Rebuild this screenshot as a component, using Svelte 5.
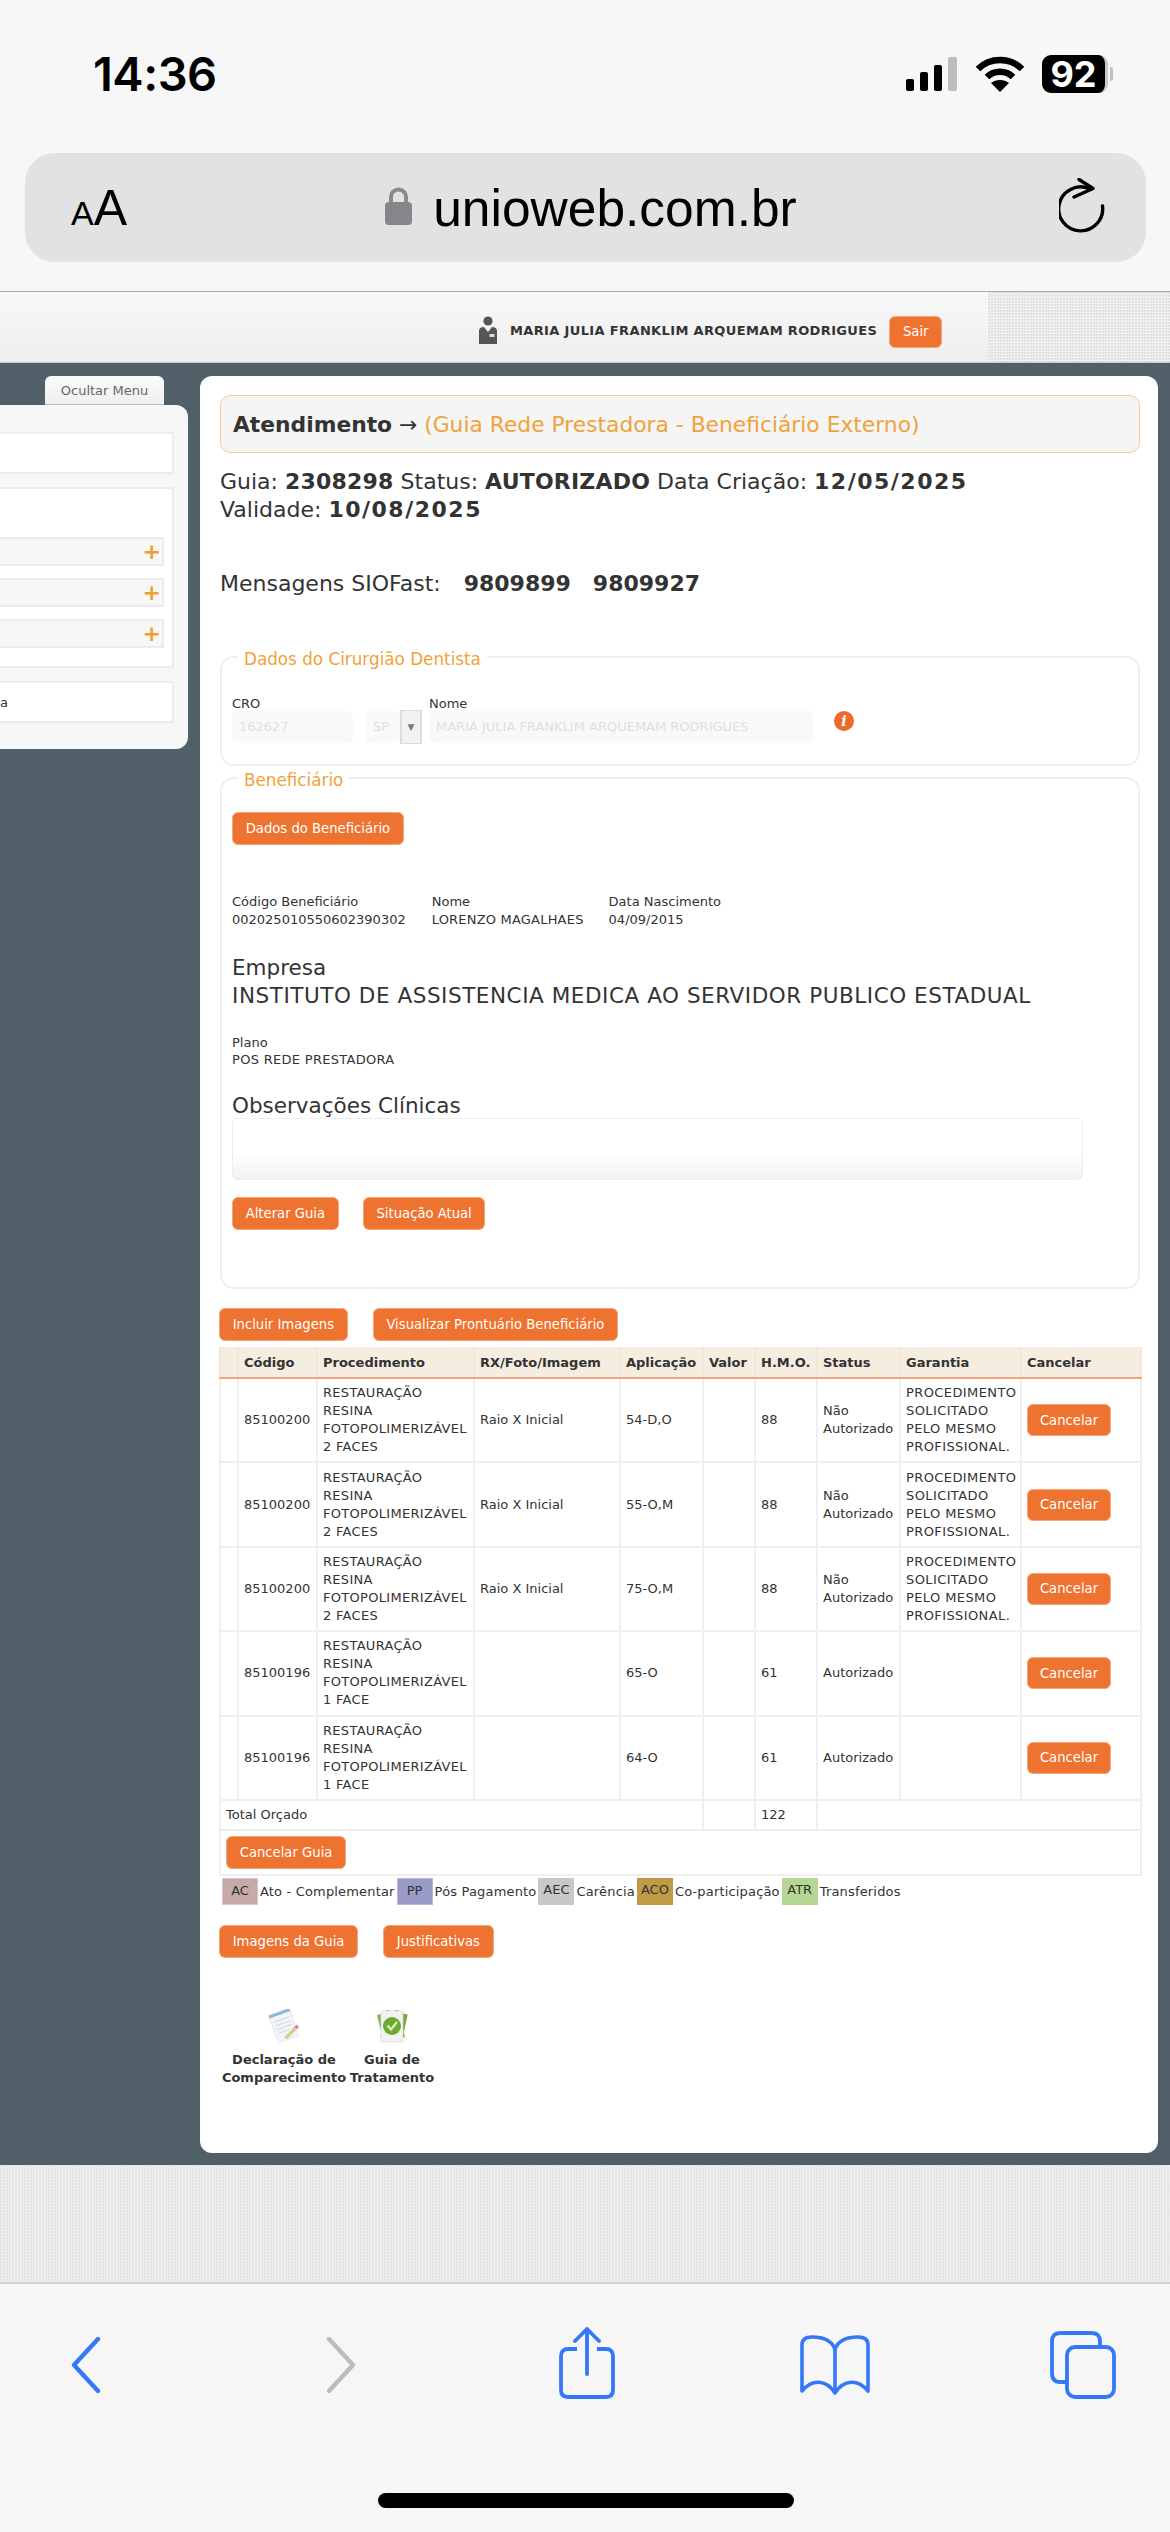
<script>
  const rows = [
    { code: '85100200', face: '2 FACES', rx: 'Raio X Inicial', app: '54-D,O', hmo: '88', no: true },
    { code: '85100200', face: '2 FACES', rx: 'Raio X Inicial', app: '55-O,M', hmo: '88', no: true },
    { code: '85100200', face: '2 FACES', rx: 'Raio X Inicial', app: '75-O,M', hmo: '88', no: true },
    { code: '85100196', face: '1 FACE', rx: '', app: '65-O', hmo: '61', no: false },
    { code: '85100196', face: '1 FACE', rx: '', app: '64-O', hmo: '61', no: false }
  ];
  const legend = [
    { k: 'AC', t: 'Ato - Complementar', c: 'ac' },
    { k: 'PP', t: 'Pós Pagamento', c: 'pp' },
    { k: 'AEC', t: 'Carência', c: 'aec' },
    { k: 'ACO', t: 'Co-participação', c: 'aco' },
    { k: 'ATR', t: 'Transferidos', c: 'atr' }
  ];
</script>

<div class="phone">
  <div class="status">
    <span class="time">14:36</span>
    <div class="status-icons">
      <svg width="52" height="34" viewBox="0 0 52 34">
        <rect x="0" y="22" width="8" height="12" rx="2" fill="#000"/>
        <rect x="14" y="15" width="8" height="19" rx="2" fill="#000"/>
        <rect x="28" y="8" width="8" height="26" rx="2" fill="#000"/>
        <rect x="42" y="0" width="9" height="34" rx="2" fill="#bdbdbd"/>
      </svg>
      <svg class="wifi" width="50" height="36" viewBox="0 0 50 36">
        <path d="M3 13 C15 1 35 1 47 13" fill="none" stroke="#000" stroke-width="6.5"/>
        <path d="M12 21 C19 14 31 14 38 21" fill="none" stroke="#000" stroke-width="6.5"/>
        <path d="M25 36 L16 27 C21 23 29 23 34 27 Z" fill="#000"/>
      </svg>
      <div class="battery"><span>92</span></div>
      <div class="nub"></div>
    </div>
  </div>

  <div class="urlbar">
    <span class="aa"><small>A</small>A</span>
    <div class="url">
      <svg width="27" height="38" viewBox="0 0 27 38">
        <path d="M6 17 V10 a7.5 7.5 0 0 1 15 0 V17" fill="none" stroke="#8a8a8e" stroke-width="4"/>
        <rect x="0" y="15" width="27" height="23" rx="4" fill="#85858a"/>
      </svg>
      <span>unioweb.com.br</span>
    </div>
    <svg class="reload" width="46" height="55" viewBox="0 0 46 55">
      <path d="M30 10.5 A22 22 0 1 0 43.5 28" fill="none" stroke="#000" stroke-width="3.4" stroke-linecap="round"/>
      <path d="M20 1.5 L34 10.5 L15 19" fill="none" stroke="#000" stroke-width="3.4" stroke-linecap="round" stroke-linejoin="round"/>
    </svg>
  </div>

  <header class="site-head">
    <div class="user">
      <svg width="20" height="28" viewBox="0 0 20 28">
        <circle cx="10" cy="5" r="4.6" fill="#555"/>
        <path d="M1 28 V15 Q1 11 6 11 L10 16 L14 11 Q19 11 19 15 V28 Z" fill="#555"/>
        <rect x="11.5" y="18" width="5" height="3" fill="#ddd"/>
      </svg>
      <strong>MARIA JULIA FRANKLIM ARQUEMAM RODRIGUES</strong>
      <button class="btn sair">Sair</button>
    </div>
    <div class="texture head-tex"></div>
  </header>

  <main class="stage">
    <aside class="side">
      <div class="tab">Ocultar Menu</div>
      <div class="panel">
        <div class="box b1"></div>
        <div class="box b2">
          <div class="item"><span>+</span></div>
          <div class="item"><span>+</span></div>
          <div class="item"><span>+</span></div>
        </div>
        <div class="box b3"><span>a</span></div>
      </div>
    </aside>

    <section class="card">
      <h1><b>Atendimento</b> → <em>(Guia Rede Prestadora - Beneficiário Externo)</em></h1>
      <p class="meta">Guia: <b class="num">2308298</b> Status: <b class="num">AUTORIZADO</b> Data Criação: <b class="date">12/05/2025</b><br>Validade: <b class="date">10/08/2025</b></p>
      <p class="msgs">Mensagens SIOFast: <b class="m1">9809899</b> <b class="m2">9809927</b></p>

      <fieldset class="fs dent">
        <legend>Dados do Cirurgião Dentista</legend>
        <div class="dent-row">
          <div class="field"><label for="cro">CRO</label><div id="cro" class="inp cro">162627</div></div>
          <div class="field sel"><div class="inp uf">SP</div><div class="arrow">▼</div></div>
          <div class="field"><label for="nm">Nome</label><div id="nm" class="inp nome">MARIA JULIA FRANKLIM ARQUEMAM RODRIGUES</div></div>
          <div class="info">i</div>
        </div>
      </fieldset>

      <fieldset class="fs benef">
        <legend>Beneficiário</legend>
        <button class="btn">Dados do Beneficiário</button>
        <div class="bdata">
          <div><span>Código Beneficiário</span><span>002025010550602390302</span></div>
          <div><span>Nome</span><span class="cap">LORENZO MAGALHAES</span></div>
          <div><span>Data Nascimento</span><span>04/09/2015</span></div>
        </div>
        <p class="big emp">Empresa<br><span class="capbig">INSTITUTO DE ASSISTENCIA MEDICA AO SERVIDOR PUBLICO ESTADUAL</span></p>
        <p class="plano">Plano<br><span class="cap">POS REDE PRESTADORA</span></p>
        <p class="big obs">Observações Clínicas</p>
        <div class="ta"></div>
        <div class="btns b-alt">
          <button class="btn">Alterar Guia</button>
          <button class="btn">Situação Atual</button>
        </div>
      </fieldset>

      <div class="btns b-inc">
        <button class="btn">Incluir Imagens</button>
        <button class="btn">Visualizar Prontuário Beneficiário</button>
      </div>

      <table>
        <colgroup>
          <col style="width:18px"><col style="width:79px"><col style="width:157px"><col style="width:146px"><col style="width:83px"><col style="width:52px"><col style="width:62px"><col style="width:83px"><col style="width:121px"><col style="width:120px">
        </colgroup>
        <thead>
          <tr><th></th><th>Código</th><th>Procedimento</th><th>RX/Foto/Imagem</th><th>Aplicação</th><th>Valor</th><th>H.M.O.</th><th>Status</th><th>Garantia</th><th>Cancelar</th></tr>
        </thead>
        <tbody>
          {#each rows as r}
            <tr class="row">
              <td></td>
              <td>{r.code}</td>
              <td class="cap">RESTAURAÇÃO<br>RESINA<br>FOTOPOLIMERIZÁVEL<br>{r.face}</td>
              <td>{r.rx}</td>
              <td>{r.app}</td>
              <td></td>
              <td>{r.hmo}</td>
              <td>{#if r.no}Não<br>Autorizado{:else}Autorizado{/if}</td>
              <td class="cap2">{#if r.no}PROCEDIMENTO<br>SOLICITADO<br>PELO MESMO<br>PROFISSIONAL.{/if}</td>
              <td><button class="btn">Cancelar</button></td>
            </tr>
          {/each}
          <tr class="total">
            <td colspan="5">Total Orçado</td>
            <td></td>
            <td>122</td>
            <td colspan="3"></td>
          </tr>
          <tr class="cg">
            <td colspan="10"><button class="btn">Cancelar Guia</button></td>
          </tr>
        </tbody>
      </table>

      <div class="legend">
        {#each legend as l}
          <span class="chip {l.c}">{l.k}</span><span class="lt">{l.t}</span>
        {/each}
      </div>

      <div class="btns b-img">
        <button class="btn">Imagens da Guia</button>
        <button class="btn">Justificativas</button>
      </div>

      <div class="docs">
        <div class="doc d1">
          <svg width="34" height="34" viewBox="0 0 34 34">
            <g transform="rotate(-20 17 17)">
              <rect x="6" y="2" width="22" height="29" fill="#f3f5f6" stroke="#dde2e4" stroke-width="0.6"/>
              <rect x="6" y="2" width="22" height="3" fill="#84bcd8"/>
              <path d="M9 10h16M9 14h16M9 18h16M9 22h12" stroke="#d5d8da" stroke-width="1"/>
            </g>
            <path d="M17 29 L27 18 L30 20 L20 30 Z" fill="#dcc98c"/>
            <path d="M27 18 L30 15.5 L32 18 L30 20 Z" fill="#d2859a"/>
          </svg>
          <span>Declaração de<br>Comparecimento</span>
        </div>
        <div class="doc d2">
          <svg width="34" height="34" viewBox="0 0 34 34">
            <rect x="5" y="3" width="22" height="28" fill="#8cb44a" transform="rotate(-14 16 17)"/>
            <rect x="8" y="3" width="22" height="28" fill="#7ea63e" transform="rotate(12 19 17)"/>
            <rect x="6" y="2" width="22" height="31" fill="#f2f3f1" stroke="#d8dad6" stroke-width="0.6"/>
            <circle cx="17" cy="17" r="9" fill="#6fa92f"/>
            <path d="M12.5 16.5 L16 20.5 L22 13" fill="none" stroke="#dff0c0" stroke-width="2.2"/>
          </svg>
          <span>Guia de<br>Tratamento</span>
        </div>
      </div>
    </section>
  </main>

  <div class="texture foot-tex"></div>

  <nav class="toolbar">
    <div class="tools">
      <svg class="t-back" width="30" height="56" viewBox="0 0 30 56"><path d="M27 2 L3 28 L27 54" fill="none" stroke="#3478f6" stroke-width="4.4" stroke-linecap="round" stroke-linejoin="round"/></svg>
      <svg class="t-fwd" width="30" height="56" viewBox="0 0 30 56"><path d="M3 2 L27 28 L3 54" fill="none" stroke="#bcbcbc" stroke-width="4.4" stroke-linecap="round" stroke-linejoin="round"/></svg>
      <svg class="t-share" width="56" height="72" viewBox="0 0 56 72">
        <path d="M18 22 H9 Q2 22 2 29 V63 Q2 70 9 70 H47 Q54 70 54 63 V29 Q54 22 47 22 H38" fill="none" stroke="#3478f6" stroke-width="3.8"/>
        <path d="M28 47 V2 M16 14 L28 2 L40 14" fill="none" stroke="#3478f6" stroke-width="3.8" stroke-linecap="round" stroke-linejoin="round"/>
      </svg>
      <svg class="t-book" width="70" height="60" viewBox="0 0 70 60">
        <path d="M35 14 C31 4 22 2 12 2 Q2 2 2 10 V56 C12 44 26 44 35 58 C44 44 58 44 68 56 V10 Q68 2 58 2 C48 2 39 4 35 14 Z M35 14 V58" fill="none" stroke="#3478f6" stroke-width="3.6" stroke-linejoin="round"/>
      </svg>
      <svg class="t-tabs" width="66" height="68" viewBox="0 0 66 68">
        <path d="M50 16 V10 Q50 2 42 2 H10 Q2 2 2 10 V42 Q2 51 10 51 H17" fill="none" stroke="#3478f6" stroke-width="3.8"/>
        <rect x="17" y="16" width="47" height="50" rx="8" fill="none" stroke="#3478f6" stroke-width="3.8"/>
      </svg>
    </div>
    <div class="homebar"></div>
  </nav>
</div>

<style>
  :global(body) { margin: 0; background: #f7f7f7; }
  .phone { width: 1170px; height: 2532px; overflow: hidden; display: flex; flex-direction: column; background: #f7f7f7; font-family: "DejaVu Sans", Verdana, sans-serif; color: #333; }

  .status { height: 153px; box-sizing: border-box; padding: 55px 57px 0 93px; display: flex; justify-content: space-between; align-items: flex-start; font-family: Inter, "Liberation Sans", sans-serif; }
  .time { font-size: 47px; font-weight: 600; line-height: 38px; color: #000; letter-spacing: -0.5px; }
  .status-icons { display: flex; align-items: center; height: 38px; }
  .wifi { margin-left: 17px; }
  .battery { margin-left: 17px; width: 63px; height: 38px; background: #000; border-radius: 9px; display: flex; align-items: center; justify-content: center; border-right: 3px solid #c9c9c9; }
  .battery span { color: #fff; font-weight: 700; font-size: 36px; line-height: 38px; }
  .nub { width: 3px; height: 14px; background: #c0c0c0; border-radius: 0 3px 3px 0; margin-left: 2px; }

  .urlbar { margin: 0 24px 0 25px; height: 109px; background: #e2e2e2; border-radius: 30px; display: flex; align-items: center; justify-content: space-between; padding: 0 41px 0 46px; font-family: "Liberation Sans", Inter, sans-serif; color: #000; }
  .aa { font-size: 50px; line-height: 1; width: 60px; white-space: nowrap; }
  .aa small { font-size: 34px; }
  .url { display: flex; align-items: center; gap: 21px; font-size: 51.5px; margin-right: 8px; }
  .url svg { margin-top: -4px; }
  .reload { margin-top: -4px; }

  .site-head { margin-top: 29px; height: 72px; border-top: 1px solid #aaa; box-sizing: border-box; display: flex; justify-content: space-between; background: linear-gradient(#f8f8f8, #eeeeee); border-bottom: 1px solid #c9c9c9; }
  .user { margin-left: 478px; display: flex; align-items: center; height: 71px; }
  .user svg { margin-top: 5px; }
  .user strong { margin-left: 12px; font-size: 13px; letter-spacing: .36px; color: #333; white-space: nowrap; margin-top: 5px; }
  .head-tex { width: 182px; }
  .texture {
    background-color: #f1f1f1;
    background-image:
      radial-gradient(circle at 1px 1px, rgba(0,0,0,.055) 0 1px, transparent 1.2px),
      repeating-linear-gradient(0deg, rgba(0,0,0,.02) 0 1px, transparent 1px 3px);
    background-size: 3px 3px, auto;
  }

  .btn { background: #ee7230; color: #fff; border: 1px solid #f6a77a; border-radius: 6px; font: 13.2px/1 "DejaVu Sans", Verdana, sans-serif; height: 33px; padding: 0 12.7px; white-space: nowrap; box-sizing: border-box; }
  .sair { margin-left: 12px; height: 32px; width: 53px; padding: 0; margin-top: 9px; }

  .stage { height: 1802px; background: #515f69; display: flex; padding-top: 13px; box-sizing: border-box; }
  .side { width: 188px; flex: none; display: flex; flex-direction: column; align-items: flex-end; }
  .tab { width: 119px; height: 29px; margin-right: 24px; box-sizing: border-box; background: linear-gradient(#fbfbfb, #efefef); border-radius: 6px 6px 0 0; border-bottom: 1px solid #bbb; font-size: 13px; line-height: 29px; text-align: center; color: #666; }
  .panel { width: 188px; height: 344px; box-sizing: border-box; background: #f7f7f7; border-radius: 0 12px 12px 0; padding: 27px 14px 0 0; display: flex; flex-direction: column; gap: 13px; }
  .box { background: #fff; border: 2px solid #ececec; border-left: 0; box-sizing: border-box; }
  .b1, .b3 { height: 42px; }
  .b2 { height: 181px; padding: 48px 8px 0 0; display: flex; flex-direction: column; gap: 12px; }
  .b3 { font-size: 13px; line-height: 40px; color: #333; }
  .item { height: 29px; background: #f7f7f7; border: 2px solid #ececec; border-left: 0; box-sizing: border-box; display: flex; justify-content: flex-end; align-items: center; padding-right: 1px; color: #f0a033; font-size: 22px; font-weight: 700; }

  .card { width: 958px; margin-left: 12px; height: 1777px; box-sizing: border-box; background: #fff; border-radius: 12px; padding: 19px 18px 0 20px; }
  h1 { margin: 0; height: 58px; box-sizing: border-box; background: #f5f5f5; border: 1px solid #f3cd9b; border-radius: 10px; padding: 0 12px; font-size: 21.8px; font-weight: 400; line-height: 57px; white-space: nowrap; }
  h1 b { font-weight: 700; }
  h1 em { font-style: normal; color: #f0a23c; }
  .meta { margin: 15px 0 0; font-size: 22px; line-height: 28px; }
  .num { letter-spacing: .2px; }
  .date { letter-spacing: 1.5px; }
  .msgs { margin: 46px 0 0; font-size: 22px; line-height: 28px; }
  .m1 { margin-left: 16px; }
  .m2 { margin-left: 15px; }

  .fs { border: 2px solid #efefef; border-radius: 14px; margin: 0; padding: 0 10px; box-sizing: border-box; min-width: 0; }
  legend { color: #f0a23c; font-size: 16.8px; line-height: 24px; padding: 3px 6px 0; margin-left: 6px; }
  .dent { margin-top: 45.5px; height: 122.5px; }
  .dent-row { display: flex; align-items: flex-start; margin-top: 22.5px; }
  .field { display: flex; flex-direction: column; }
  .field label { font-size: 13px; line-height: 15px; height: 18px; padding-top: 3px; box-sizing: border-box; }
  .inp { height: 32px; box-sizing: border-box; background: #f9f9f9; border-radius: 5px; font-size: 13px; line-height: 32px; color: #dfdfdf; padding: 0 7px; white-space: nowrap; overflow: hidden; }
  .cro { width: 121px; margin-right: 13px; }
  .sel { flex-direction: row; margin-top: 18px; margin-right: 7px; }
  .uf { width: 34px; }
  .arrow { height: 32px; margin-top: -1px; border: 2px solid #ddd; border-width: 1px 2px; background: #f2f2f2; color: #777; font-size: 9px; line-height: 32px; text-align: center; width: 18px; }
  .nome { width: 384px; }
  .info { margin: 18px 0 0 21px; width: 20px; height: 20px; border-radius: 50%; background: #ee6a2a; color: #fff; font: italic 700 14px/20px "DejaVu Serif", serif; text-align: center; }

  .benef { margin-top: -1.5px; height: 524.5px; }
  .benef > .btn { display: block; margin-top: 20.5px; }
  .bdata { display: flex; gap: 25px; margin-top: 48px; font-size: 13px; line-height: 18px; }
  .bdata > div { display: flex; flex-direction: column; }
  .bdata > div:first-child { margin-right: 1px; }
  .cap { letter-spacing: .3px; }
  .bdata .cap { letter-spacing: .2px; }
  .cap2 { letter-spacing: .4px; }
  .capbig { letter-spacing: .55px; }
  .big { margin: 0; font-size: 21.5px; line-height: 28px; }
  .emp { margin-top: 25px; white-space: nowrap; }
  .plano { margin: 24px 0 0; font-size: 13px; line-height: 17px; }
  .obs { margin-top: 25px; line-height: 26px; }
  .ta { margin-top: -1px; width: 851px; height: 62px; box-sizing: border-box; border: 1px solid #eee; border-radius: 6px; background: linear-gradient(#fff 55%, #f2f2f2); }
  .btns { display: flex; gap: 25px; }
  .b-alt { margin-top: 17px; gap: 24px; }
  .b-inc { margin-top: 19px; margin-left: -1px; }

  table { margin: 6px 0 0 -1px; width: 921px; border-collapse: collapse; table-layout: fixed; font-size: 13px; line-height: 18px; }
  th { height: 28px; background: #f5ede0; border: 2px solid #eee8dc; border-top: 0; border-bottom: 2px solid #f2a87a; padding: 2px 5px 0; box-sizing: content-box; text-align: left; font-weight: 700; white-space: nowrap; }
  td { border: 2px solid #efefef; padding: 0 5px; vertical-align: middle; white-space: nowrap; }
  .row td { height: 82.4px; }
  .total td { height: 28px; }
  .total td:first-child { padding-left: 5px; }
  .cg td { height: 43px; padding-left: 5px; }
  .cg .btn { display: block; }
  .row .btn { height: 32px; width: 84px; padding: 0; display: block; }

  .legend { display: flex; align-items: center; margin-top: 2px; height: 27px; font-size: 13px; padding-left: 2px; white-space: nowrap; }
  .chip { width: 36px; height: 27px; box-sizing: border-box; text-align: center; line-height: 24px; flex: none; }
  .lt { padding: 0 2px; letter-spacing: .17px; }
  .ac { background: #c7a9a9; border: 1px solid #d8c6c6; }
  .pp { background: #9a9ac8; border: 1px solid #b8b8da; }
  .aec { background: #c8c8c8; }
  .aco { background: #c19a45; }
  .atr { background: #b6d693; }
  .b-img { margin: 20px 0 0 -1px; }

  .docs { display: flex; margin-top: 51px; font-size: 13px; line-height: 18px; font-weight: 700; text-align: center; }
  .doc { display: flex; flex-direction: column; align-items: center; }
  .doc span { margin-top: 8px; white-space: nowrap; }
  .d1 { margin-left: 1px; width: 126px; }
  .d2 { margin-left: 2px; width: 86px; }

  .foot-tex { height: 117px; }
  .toolbar { border-top: 2px solid #d2d2d2; height: 250px; box-sizing: border-box; position: relative; background: #f6f6f6; }
  .tools { display: flex; align-items: flex-start; height: 100%; }
  .t-back { margin: 53px 0 0 71px; }
  .t-fwd { margin: 53px 0 0 225px; }
  .t-share { margin: 43px 0 0 203px; }
  .t-book { margin: 51px 0 0 185px; }
  .t-tabs { margin: 47px 0 0 180px; }
  .homebar { position: absolute; left: 378px; top: 209px; width: 416px; height: 15px; border-radius: 8px; background: #000; }
</style>
